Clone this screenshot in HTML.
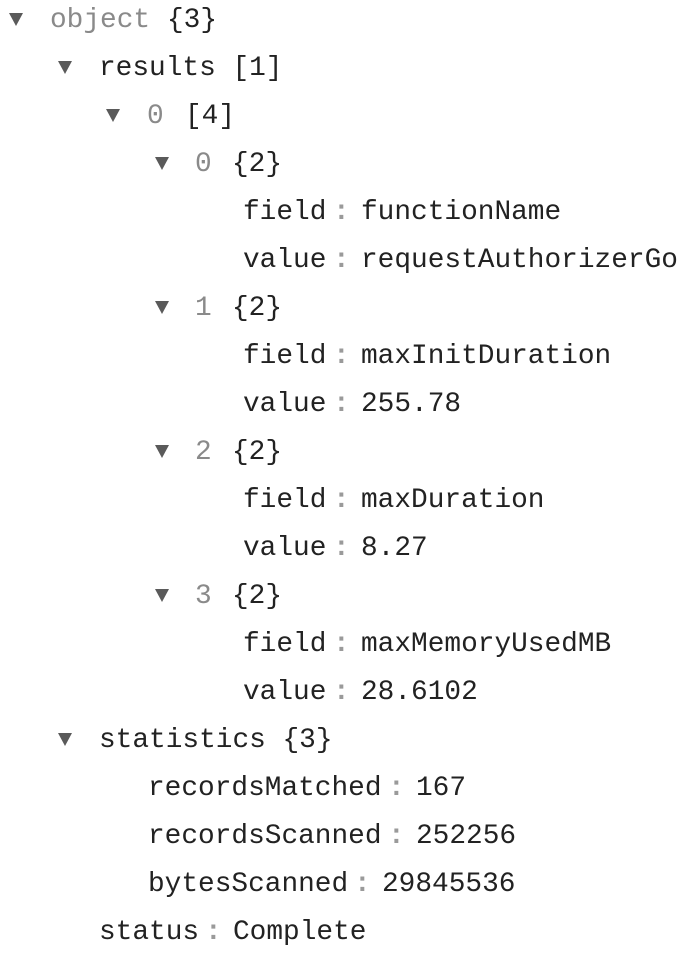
<!DOCTYPE html>
<html><head><meta charset="utf-8"><style>
body{margin:0;width:698px;height:962px;background:#fff;overflow:hidden;font-family:"Liberation Mono","DejaVu Sans Mono",monospace;font-size:27.8px;color:#222}
.r{position:absolute;height:48px;line-height:48px;white-space:pre}
.t{position:absolute;width:0;height:0;border-left:7px solid transparent;border-right:7px solid transparent;border-top:13px solid #5a5a5a}
.g{color:#8a8a8a}
.c{color:#9a9a9a;font-weight:bold}
</style></head><body>
<div id="w"></div>
<script>
var rows=[
[18,9,[[50,'object','g'],[167,'{3}']]],
[66,58,[[99,'results [1]']]],
[114,106,[[147,'0','g'],[185,'[4]']]],
[162,155,[[195,'0','g'],[232,'{2}']]],
[210,0,[[243,'field'],[333,':','c'],[361,'functionName']]],
[258,0,[[243,'value'],[333,':','c'],[361,'requestAuthorizerGo']]],
[306,155,[[195,'1','g'],[232,'{2}']]],
[354,0,[[243,'field'],[333,':','c'],[361,'maxInitDuration']]],
[402,0,[[243,'value'],[333,':','c'],[361,'255.78']]],
[450,155,[[195,'2','g'],[232,'{2}']]],
[498,0,[[243,'field'],[333,':','c'],[361,'maxDuration']]],
[546,0,[[243,'value'],[333,':','c'],[361,'8.27']]],
[594,155,[[195,'3','g'],[232,'{2}']]],
[642,0,[[243,'field'],[333,':','c'],[361,'maxMemoryUsedMB']]],
[690,0,[[243,'value'],[333,':','c'],[361,'28.6102']]],
[738,58,[[99,'statistics {3}']]],
[786,0,[[148,'recordsMatched'],[388,':','c'],[416,'167']]],
[834,0,[[148,'recordsScanned'],[388,':','c'],[416,'252256']]],
[882,0,[[148,'bytesScanned'],[354,':','c'],[382,'29845536']]],
[930,0,[[99,'status'],[205,':','c'],[233,'Complete']]]
];
var h='';
rows.forEach(function(r){
 if(r[1])h+='<div class="t" style="left:'+r[1]+'px;top:'+(r[0]-5)+'px"></div>';
 r[2].forEach(function(s){h+='<div class="r '+(s[2]||'')+'" style="left:'+s[0]+'px;top:'+(r[0]-21)+'px">'+s[1]+'</div>';});
});
document.getElementById('w').innerHTML=h;
</script>
</body></html>
